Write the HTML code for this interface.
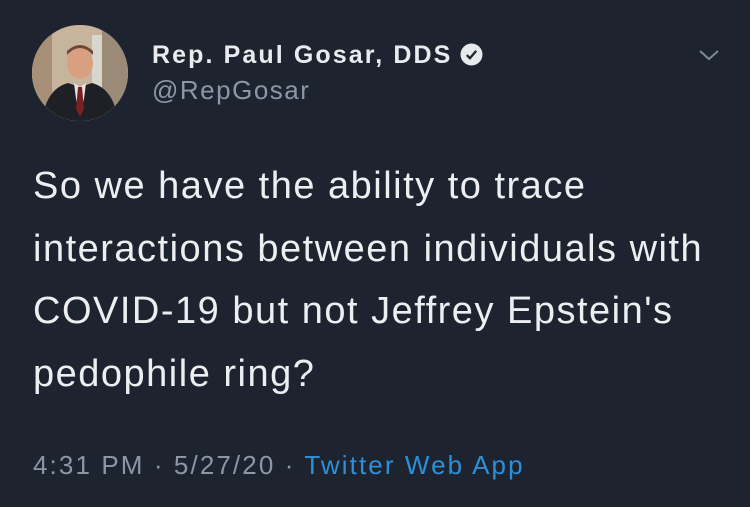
<!DOCTYPE html>
<html><head><meta charset="utf-8"><style>
html,body{margin:0;padding:0}
body{width:750px;height:507px;background:#1d2430;position:relative;overflow:hidden;font-family:"Liberation Sans",sans-serif}
.av{position:absolute;left:32px;top:25px;width:96px;height:96px;border-radius:50%;overflow:hidden;background:#b9a48e}
.name{position:absolute;left:152px;top:41px;color:#e9ebee;font-weight:bold;font-size:25px;letter-spacing:2.1px;white-space:nowrap}
.handle{position:absolute;left:152px;top:75px;color:#8b97a4;font-size:26px;letter-spacing:1.5px}
.body{position:absolute;left:33px;top:155px;color:#eceef0;font-size:38px;line-height:62.5px;letter-spacing:1.5px;white-space:nowrap}
.foot{position:absolute;left:33px;top:450px;color:#8b97a4;font-size:26px;letter-spacing:2.1px;white-space:nowrap}
.foot span{color:#2d8fd8}
</style></head><body>
<div class="av"><svg width="96" height="96" viewBox="0 0 96 96">
<rect width="96" height="96" fill="#c7b49c"/>
<rect x="0" y="0" width="20" height="96" fill="#a88f78"/>
<rect x="60" y="10" width="20" height="60" fill="#d9d5cf"/>
<rect x="70" y="0" width="26" height="96" fill="#9b8a78"/>
<ellipse cx="48" cy="38" rx="13" ry="16" fill="#d8a080"/>
<path d="M35 30 Q48 16 61 30 L61 26 Q48 14 35 26Z" fill="#6b4a35"/>
<path d="M10 96 Q14 64 36 58 L48 62 L60 58 Q82 64 86 96Z" fill="#1e2026"/>
<path d="M42 58 L48 62 L54 58 L52 74 L48 90 L44 74Z" fill="#e8e4e4"/>
<path d="M46 62 L50 62 L52 84 L48 92 L44 84Z" fill="#7a1f22"/>
</svg></div>
<div class="name">Rep. Paul Gosar, DDS<svg width="23" height="23" viewBox="0 0 22 22" style="vertical-align:-3px;margin-left:8px"><circle cx="11" cy="11" r="10.5" fill="#e8e9eb"/><path d="M6.5 11.5 L9.5 14.5 L15.5 7.5" stroke="#1d2430" stroke-width="2.2" fill="none"/></svg></div>
<div class="handle">@RepGosar</div>
<svg style="position:absolute;left:698px;top:48px" width="22" height="14" viewBox="0 0 22 14"><path d="M2 3 L11 11 L20 3" stroke="#7f8a96" stroke-width="2" fill="none"/></svg>
<div class="body">So we have the ability to trace<br>interactions between individuals with<br>COVID-19 but not Jeffrey Epstein's<br>pedophile ring?</div>
<div class="foot">4:31 PM · 5/27/20 · <span>Twitter Web App</span></div>
</body></html>
